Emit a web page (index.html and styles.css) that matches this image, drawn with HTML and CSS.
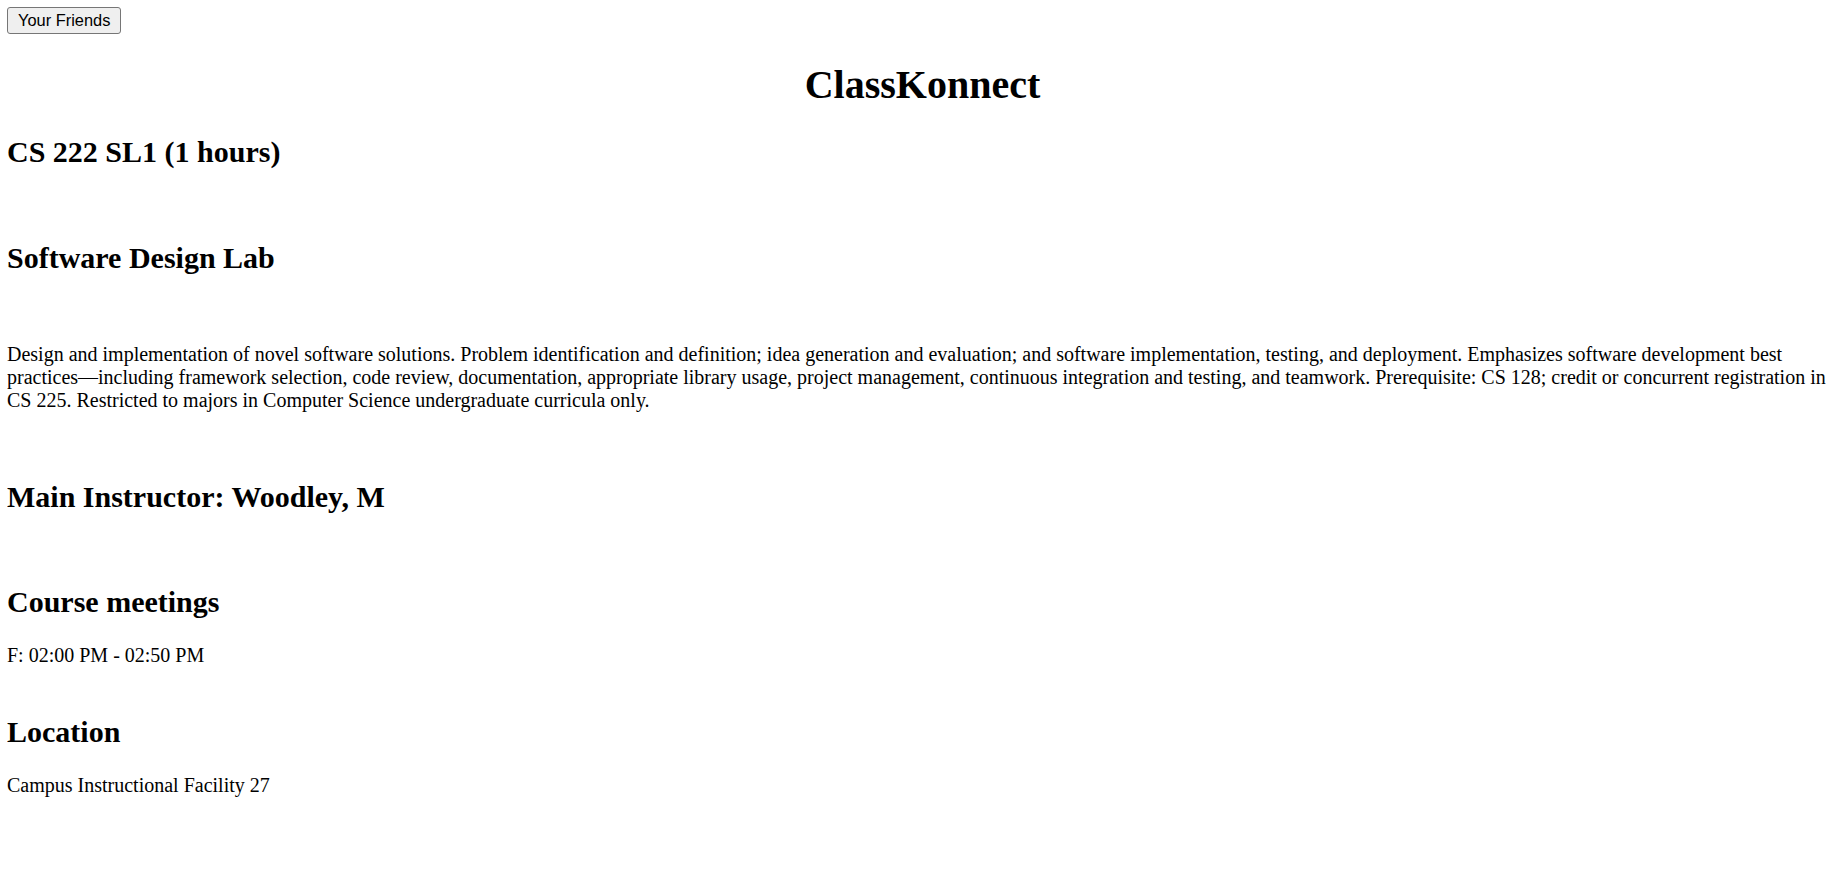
FILE: index.html
```html
<!DOCTYPE html>
<html lang="en">
<head>
<meta charset="utf-8">
<title>ClassKonnect</title>
<link rel="stylesheet" href="styles.css">
</head>
<body class="page">
  <div class="topbar">
    <button class="friends-btn" type="button">Your Friends</button>
  </div>
  <h1 class="title">ClassKonnect</h1>
  <h2 class="heading">CS 222 SL1 (1 hours)</h2>
  <div class="gap"></div>
  <h2 class="heading">Software Design Lab</h2>
  <div class="gap"></div>
  <p class="text">Design and implementation of novel software solutions. Problem identification and definition; idea generation and evaluation; and software implementation, testing, and deployment. Emphasizes software development best practices—including framework selection, code review, documentation, appropriate library usage, project management, continuous integration and testing, and teamwork. Prerequisite: CS 128; credit or concurrent registration in CS 225. Restricted to majors in Computer Science undergraduate curricula only.</p>
  <div class="gap"></div>
  <h2 class="heading">Main Instructor: Woodley, M</h2>
  <div class="gap gap-sm"></div>
  <h2 class="heading">Course meetings</h2>
  <p class="text meetings">F: 02:00 PM - 02:50 PM</p>
  <h2 class="heading">Location</h2>
  <p class="text">Campus Instructional Facility 27</p>
</body>
</html>
```
FILE: styles.css
```css
html {
  background: #ffffff;
}

.page {
  margin: 7px;
  font-family: "Liberation Serif", "Times New Roman", serif;
  font-size: 20px;
  color: #000000;
}

.topbar {
  display: flex;
}

.friends-btn {
  font-family: "Liberation Sans", Arial, sans-serif;
  font-size: 16.4px;
  line-height: normal;
  color: #000000;
  background: #efefef;
  border: 1px solid #767676;
  border-radius: 3px;
  padding: 3px 10px;
  margin: 0;
}

.title {
  font-size: 40px;
  font-weight: bold;
  text-align: center;
  margin: 26.8px 0;
}

.heading {
  font-size: 30px;
  font-weight: bold;
  margin: 24.9px 0;
}

.text {
  margin: 20px 0;
}

.meetings {
  padding-bottom: 23px;
}

.gap {
  height: 23px;
}

.gap-sm {
  height: 21.5px;
}
```
